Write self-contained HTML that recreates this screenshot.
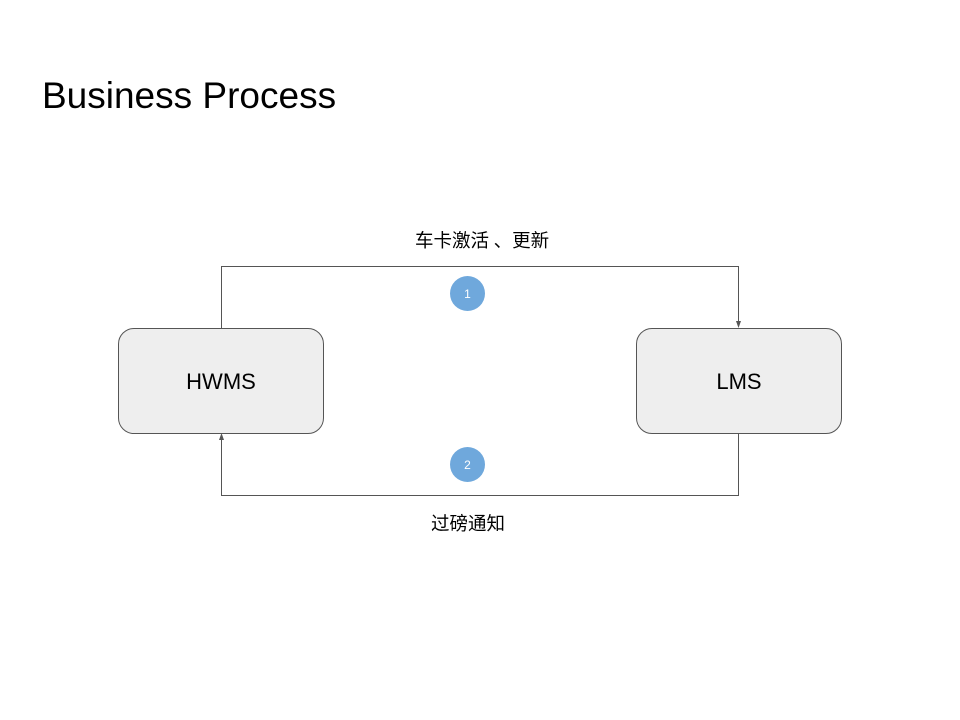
<!DOCTYPE html>
<html><head><meta charset="utf-8"><style>
body{margin:0;width:960px;height:720px;background:#fff;position:relative;overflow:hidden;font-family:"Liberation Sans","Noto Sans CJK SC",sans-serif}
.t{position:absolute;left:42px;top:75px;font-size:37px;color:#000}
.box{position:absolute;width:206px;height:106px;background:#eeeeee;border:1px solid #555;border-radius:16px;box-sizing:border-box;display:flex;align-items:center;justify-content:center;font-size:22px;color:#000;padding-top:2px}
.c{position:absolute;width:35px;height:35px;border-radius:50%;background:#6fa8dc;color:#fff;font-size:12px;display:flex;align-items:center;justify-content:center}
.l{position:absolute;font-size:18.5px;color:#000;white-space:nowrap}
</style></head><body>
<div class="t">Business Process</div>
<svg width="960" height="720" style="position:absolute;left:0;top:0">
<polyline points="221.5,328 221.5,266.5 738.5,266.5 738.5,322" fill="none" stroke="#555" stroke-width="1"/>
<polygon points="736,321 741,321 738.5,328" fill="#555"/>
<polyline points="738.5,433 738.5,495.5 221.5,495.5 221.5,440" fill="none" stroke="#555" stroke-width="1"/>
<polygon points="219,440 224,440 221.5,433" fill="#555"/>
</svg>
<div class="box" style="left:118px;top:328px">HWMS</div>
<div class="box" style="left:636px;top:328px">LMS</div>
<div class="c" style="left:450px;top:276px">1</div>
<div class="c" style="left:450px;top:447px">2</div>
<div class="l" style="left:415px;top:227px">车卡激活<span style="letter-spacing:-0.5px"> </span>、更新</div>
<div class="l" style="left:431px;top:510px">过磅通知</div>
</body></html>
